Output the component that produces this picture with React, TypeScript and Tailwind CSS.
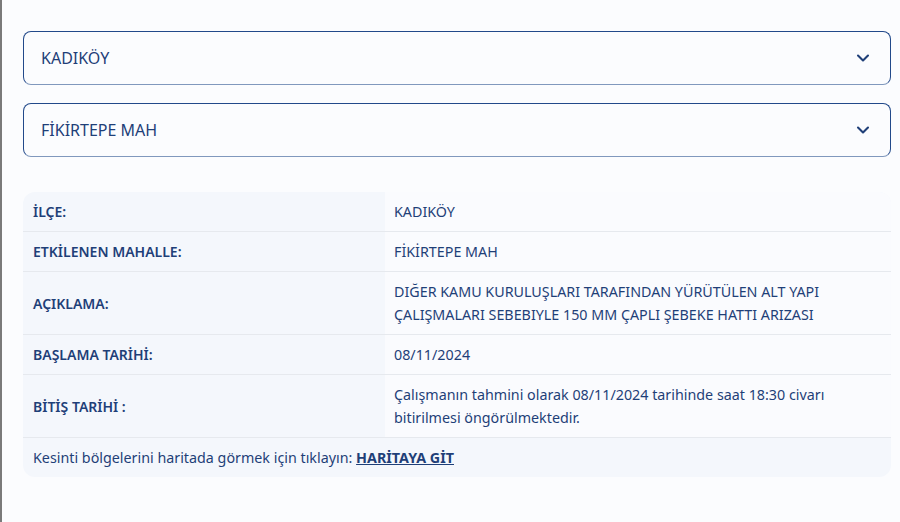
import React from 'react';
import { ChevronDown } from 'lucide-react';

interface Row {
    label: string;
    value: React.ReactNode;
    tall?: boolean;
}

const rows: Row[] = [
    { label: 'İLÇE:', value: 'KADIKÖY' },
    { label: 'ETKİLENEN MAHALLE:', value: 'FİKİRTEPE MAH' },
    {
        label: 'AÇIKLAMA:',
        value: (
            <>
                DIĞER KAMU KURULUŞLARI TARAFINDAN YÜRÜTÜLEN ALT YAPI
                <br />
                ÇALIŞMALARI SEBEBIYLE 150 MM ÇAPLI ŞEBEKE HATTI ARIZASI
            </>
        ),
        tall: true,
    },
    { label: 'BAŞLAMA TARİHİ:', value: '08/11/2024' },
    {
        label: 'BİTİŞ TARİHİ :',
        value: (
            <>
                Çalışmanın tahmini olarak 08/11/2024 tarihinde saat 18:30 civarı
                <br />
                bitirilmesi öngörülmektedir.
            </>
        ),
        tall: true,
    },
];

const SelectBox: React.FC<{ text: string }> = ({ text }) => (
    <button className="flex h-[54px] w-full items-center justify-between rounded-lg border border-[#22498a] border-b-[#8098bd] bg-[#fbfcfe] pl-[17px] pr-[17px] text-left text-[16px] text-[#1f3f78]">
        <span>{text}</span>
        <ChevronDown className="h-5 w-5 text-[#1f3f78]" strokeWidth={2.5} />
    </button>
);

const App: React.FC = () => {
    return (
        <div
            className="min-h-[522px] border-l-2 border-[#7a7a7a] bg-[#fbfcfe] pl-[21px] pr-[9px] pt-[31px]"
            style={{ fontFamily: '"Noto Sans", sans-serif' }}
        >
            <div className="flex flex-col gap-[18px]">
                <SelectBox text="KADIKÖY" />
                <SelectBox text="FİKİRTEPE MAH" />
            </div>

            {/* Detail table */}
            <div className="mt-[35px] overflow-hidden rounded-xl bg-[#f4f7fc] text-[14px] text-[#1f3f78]">
                {rows.map((row) => (
                    <div key={row.label} className="flex border-b border-[#e6e9ee]">
                        <div
                            className={`flex w-[362px] items-center pl-[10px] font-semibold ${row.tall ? 'h-[62px]' : 'h-[39px]'}`}
                        >
                            {row.label}
                        </div>
                        <div className="flex flex-1 items-center bg-[#fafbfe] pl-[9px] text-[14.3px] leading-[23px]">
                            <div>{row.value}</div>
                        </div>
                    </div>
                ))}
                <div className="flex h-[39px] items-center pl-[10px] text-[14.3px]">
                    <span>
                        Kesinti bölgelerini haritada görmek için tıklayın:{' '}
                        <a href="#" className="font-bold underline">
                            HARİTAYA GİT
                        </a>
                    </span>
                </div>
            </div>
        </div>
    );
};

export default App;
